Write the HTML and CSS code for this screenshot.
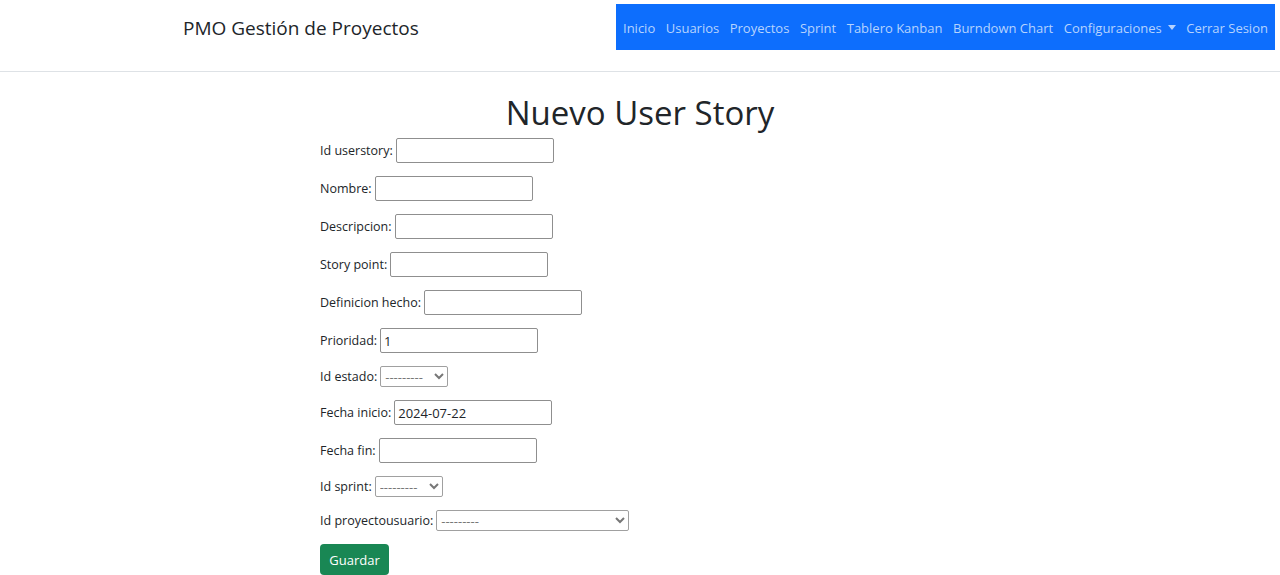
FILE: index.html
```html
<!DOCTYPE html>
<html lang="es">
<head>
<meta charset="utf-8">
<title>Nuevo User Story</title>
<link rel="stylesheet" href="styles.css">
</head>
<body>
<header class="topbar">
  <a class="brand" href="#">PMO Gestión de Proyectos</a>
  <nav class="mainnav">
    <a href="#">Inicio</a>
    <a href="#">Usuarios</a>
    <a href="#">Proyectos</a>
    <a href="#">Sprint</a>
    <a href="#">Tablero Kanban</a>
    <a href="#">Burndown Chart</a>
    <a href="#" class="dropdown">Configuraciones <span class="caret"></span></a>
    <a href="#">Cerrar Sesion</a>
  </nav>
</header>
<main class="page">
  <h1 class="title">Nuevo User Story</h1>
  <form class="story-form">
    <p class="row"><label>Id userstory:</label><input class="field" type="text"></p>
    <p class="row"><label>Nombre:</label><input class="field" type="text"></p>
    <p class="row"><label>Descripcion:</label><input class="field" type="text"></p>
    <p class="row"><label>Story point:</label><input class="field" type="text"></p>
    <p class="row"><label>Definicion hecho:</label><input class="field" type="text"></p>
    <p class="row"><label>Prioridad:</label><input class="field" type="text" value="1"></p>
    <p class="row sel-row"><label>Id estado:</label><select class="pick pick-sm"><option>---------</option></select></p>
    <p class="row"><label>Fecha inicio:</label><input class="field" type="text" value="2024-07-22"></p>
    <p class="row"><label>Fecha fin:</label><input class="field" type="text"></p>
    <p class="row sel-row"><label>Id sprint:</label><select class="pick pick-sm"><option>---------</option></select></p>
    <p class="row sel-row"><label>Id proyectousuario:</label><select class="pick pick-lg"><option>---------</option></select></p>
    <button class="btn-save" type="button">Guardar</button>
  </form>
</main>
</body>
</html>
```

FILE: styles.css
```css
* { box-sizing: border-box; }
body {
  margin: 0;
  font-family: "Open Sans", "Noto Sans", sans-serif;
  color: #212529;
  background: #fff;
  font-size: 12.5px;
}
.topbar {
  display: flex;
  align-items: flex-start;
  height: 72px;
  border-bottom: 1px solid #dee2e6;
  padding-top: 4px;
}
.brand {
  margin-left: 183px;
  height: 47px;
  display: flex;
  align-items: center;
  font-size: 19px;
  color: #212529;
  text-decoration: none;
}
.mainnav {
  margin-left: auto;
  margin-right: 5px;
  width: 659px;
  height: 46px;
  background: #0d6efd;
  display: flex;
  align-items: center;
  justify-content: space-between;
  padding: 1px 7px 0;
}
.mainnav a {
  color: #b6d3fe;
  text-decoration: none;
  font-size: 13px;
  display: flex;
  align-items: center;
  gap: 6px;
}
.caret {
  width: 0;
  height: 0;
  border-left: 4px solid transparent;
  border-right: 4px solid transparent;
  border-top: 5px solid #b6d3fe;
}
.page { padding: 0; }
.title {
  text-align: center;
  font-size: 33px;
  font-weight: 500;
  margin: 19px 0 3px;
  line-height: 44px;
}
.story-form {
  margin-left: 320px;
}
.row {
  display: flex;
  align-items: center;
  gap: 3px;
  margin: 0 0 13px;
  height: 25px;
}
.sel-row { height: 21px; }
.row label { white-space: nowrap; }
.field {
  width: 158px;
  height: 25px;
  border: 1px solid #8f8f8f;
  border-radius: 2px;
  padding: 1px 3px;
  font: inherit;
  font-size: 13px;
  color: #212529;
}
.pick {
  height: 21px;
  border: 1px solid #a0a0a0;
  border-radius: 2px;
  font: inherit;
  font-size: 13px;
  color: #777;
  background: #fff;
}
.pick-sm { width: 68px; }
.pick-lg { width: 193px; }
.btn-save {
  display: block;
  width: 69px;
  height: 31px;
  background: #198754;
  border: none;
  border-radius: 4px;
  color: #fff;
  font: inherit;
  font-size: 13px;
  cursor: pointer;
}
```
